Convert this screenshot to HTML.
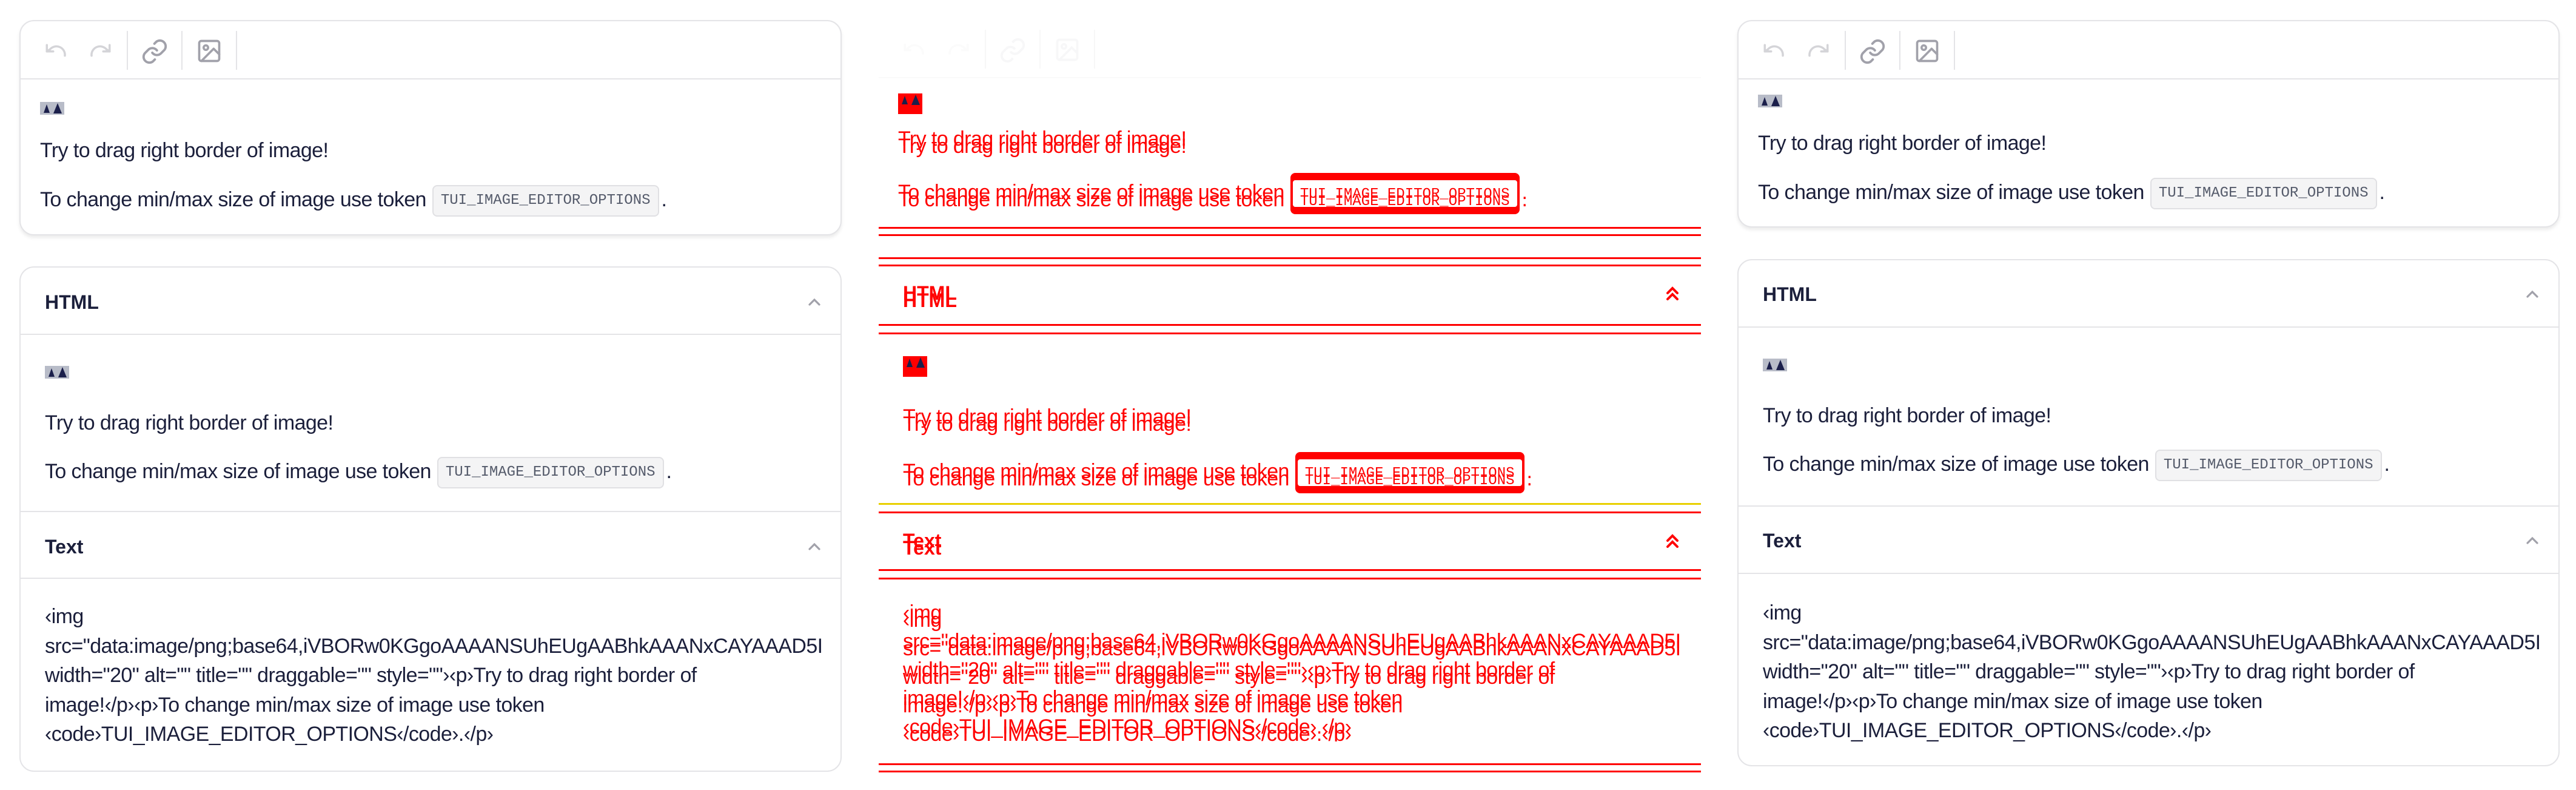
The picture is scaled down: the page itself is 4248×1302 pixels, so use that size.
<!DOCTYPE html>
<html><head><meta charset="utf-8">
<style>
*{margin:0;padding:0;box-sizing:border-box}
html,body{width:4248px;height:1302px;background:#fff;overflow:hidden;font-family:"Liberation Sans",sans-serif;color:#1b1f3b}
.panel{position:absolute;top:0;width:1356px;height:1302px}
.card{position:absolute;left:0;width:1356px;border:2px solid #e4e4e7;border-radius:24px;background:#fff}
.c1{top:33px;height:342px;box-shadow:0 4px 6px rgba(0,0,0,.08)}
.c2{top:427px;height:836px}
.tb{position:absolute;left:0;top:0;width:100%;height:96px;border-bottom:2px solid #e4e4e7}
.sep{position:absolute;top:16px;width:2px;height:64px;background:#e4e4e7}
.ic{position:absolute;top:27px}
.abs{position:absolute;white-space:nowrap}
.t{font-size:34px;line-height:48px;height:48px;letter-spacing:-0.6px}
.tok{display:inline-block;font-family:"Liberation Mono",monospace;font-size:24px;letter-spacing:0;color:#555b6b;background:#f4f4f5;border:2px solid #e0e0e3;border-radius:8px;height:52px;line-height:48px;padding:0 12px;vertical-align:middle;margin-left:10px;margin-right:4px}
.img{position:absolute;width:40px;height:21px;background:#b8bcc8}
.img:before{content:"";position:absolute;left:6px;top:4px;width:10px;height:14px;background:#1b1f4b;clip-path:polygon(50% 0,100% 100%,0 100%)}
.img:after{content:"";position:absolute;left:22px;top:2px;width:14px;height:17px;background:#1b1f4b;clip-path:polygon(50% 0,100% 100%,0 100%)}
.hd{font-size:32px;font-weight:bold;line-height:48px}
.div{position:absolute;left:0;width:100%;height:2px;background:#e4e4e7}
.chev{position:absolute}
.code{font-size:34px;letter-spacing:-0.6px;line-height:48.5px;white-space:pre;overflow:hidden;width:1300px}
/* diff panel */
.diff .card{border:none;box-shadow:none;background:transparent}
.diff .tb{border-bottom:2px solid #fafafa}
.diff .sep{background:#f7f7f7}
.diff .ic{opacity:.08}
.diff .t,.diff .hd,.diff .code{color:#f00;text-shadow:0 12px 0 #f00}
.diff .tok{background:#fff;border:4px solid #f00;box-shadow:0 -8px 0 #f00,0 8px 0 #f00;color:#f00}
.diff .div{background:#f00;height:3px;box-shadow:0 14px 0 #f00}
.diff .img{background:#f00;height:34px}
.rl{position:absolute;left:0;width:1356px;height:3px;background:#f00}
</style></head><body>

<div class="panel" style="left:32px">
 <div class="card c1" style="height:355px">
  <div class="tb">
   <svg class="ic" style="left:38px" width="42" height="42" viewBox="0 0 24 24" fill="none" stroke="#d4d4d8" stroke-width="2" stroke-linecap="round" stroke-linejoin="round"><path d="M3 7v6h6"/><path d="M20 17a8 8 0 0 0-14-6l-3 2"/></svg>
   <svg class="ic" style="left:110px" width="42" height="42" viewBox="0 0 24 24" fill="none" stroke="#d4d4d8" stroke-width="2" stroke-linecap="round" stroke-linejoin="round"><path d="M21 7v6h-6"/><path d="M4 17a8 8 0 0 1 14-6l3 2"/></svg>
   <div class="sep" style="left:175px"></div>
   <svg class="ic" style="left:198px" width="46" height="46" viewBox="0 0 24 24" fill="none" stroke="#a1a1aa" stroke-width="2" stroke-linecap="round"><path d="M10 13a5 5 0 0 0 7.5.5l3-3a5 5 0 0 0-7-7l-1.7 1.7"/><path d="M14 11a5 5 0 0 0-7.5-.5l-3 3a5 5 0 0 0 7 7l1.7-1.7"/></svg>
   <div class="sep" style="left:265px"></div>
   <svg class="ic" style="left:289px" width="44" height="44" viewBox="0 0 24 24" fill="none" stroke="#a1a1aa" stroke-width="2" stroke-linecap="round" stroke-linejoin="round"><rect x="3" y="3" width="18" height="18" rx="2"/><circle cx="9" cy="9" r="2"/><path d="M21 15l-5-5L5 21"/></svg>
   <div class="sep" style="left:355px"></div>
  </div>
  <div class="img" style="left:32px;top:133px"></div>
  <div class="abs t" style="left:32px;top:189px">Try to drag right border of image!</div>
  <div class="abs t" style="left:32px;top:270px">To change min/max size of image use token<span class="tok">TUI_IMAGE_EDITOR_OPTIONS</span>.</div>
 </div>
 <div class="card c2" style="top:439px;height:833px">
  <div class="abs hd" style="left:40px;top:33px">HTML</div>
  <svg class="chev" style="left:1295px;top:47px" width="28" height="20" viewBox="0 0 14 10" fill="none" stroke="#a1a1aa" stroke-width="1.6" stroke-linecap="round"><path d="M3 7l4-4 4 4"/></svg>
  <div class="div" style="top:109px"></div>
  <div class="img" style="left:40px;top:162px"></div>
  <div class="abs t" style="left:40px;top:232px">Try to drag right border of image!</div>
  <div class="abs t" style="left:40px;top:312px">To change min/max size of image use token<span class="tok">TUI_IMAGE_EDITOR_OPTIONS</span>.</div>
  <div class="div" style="top:401px"></div>
  <div class="abs hd" style="left:40px;top:436px">Text</div>
  <svg class="chev" style="left:1295px;top:450px" width="28" height="20" viewBox="0 0 14 10" fill="none" stroke="#a1a1aa" stroke-width="1.6" stroke-linecap="round"><path d="M3 7l4-4 4 4"/></svg>
  <div class="div" style="top:511px"></div>
  <div class="abs code" style="left:40px;top:551px">‹img
src="data:image/png;base64,iVBORw0KGgoAAAANSUhEUgAABhkAAANxCAYAAAD5I
width="20" alt="" title="" draggable="" style=""›‹p›Try to drag right border of
image!‹/p›‹p›To change min/max size of image use token
‹code›TUI_IMAGE_EDITOR_OPTIONS‹/code›.‹/p›</div>
 </div>
</div>

<div class="panel diff" style="left:1449px">
 <div class="rl" style="top:374px"></div>
 <div class="rl" style="top:386px"></div>
 <div class="rl" style="top:424px"></div>
 <div class="rl" style="top:436px"></div>
 <div class="rl" style="top:1258px"></div>
 <div class="rl" style="top:1270px"></div>
 <div class="card c1">
  <div class="tb">
   <svg class="ic" style="left:38px" width="42" height="42" viewBox="0 0 24 24" fill="none" stroke="#d4d4d8" stroke-width="2"><path d="M3 7v6h6"/><path d="M20 17a8 8 0 0 0-14-6l-3 2"/></svg>
   <svg class="ic" style="left:110px" width="42" height="42" viewBox="0 0 24 24" fill="none" stroke="#d4d4d8" stroke-width="2"><path d="M21 7v6h-6"/><path d="M4 17a8 8 0 0 1 14-6l3 2"/></svg>
   <div class="sep" style="left:175px"></div>
   <svg class="ic" style="left:198px" width="46" height="46" viewBox="0 0 24 24" fill="none" stroke="#a1a1aa" stroke-width="2"><path d="M10 13a5 5 0 0 0 7.5.5l3-3a5 5 0 0 0-7-7l-1.7 1.7"/><path d="M14 11a5 5 0 0 0-7.5-.5l-3 3a5 5 0 0 0 7 7l1.7-1.7"/></svg>
   <div class="sep" style="left:265px"></div>
   <svg class="ic" style="left:289px" width="44" height="44" viewBox="0 0 24 24" fill="none" stroke="#a1a1aa" stroke-width="2"><rect x="3" y="3" width="18" height="18" rx="2"/><circle cx="9" cy="9" r="2"/><path d="M21 15l-5-5L5 21"/></svg>
   <div class="sep" style="left:355px"></div>
  </div>
  <div class="img" style="left:32px;top:121px"></div>
  <div class="abs t" style="left:32px;top:172px">Try to drag right border of image!</div>
  <div class="abs t" style="left:32px;top:260px">To change min/max size of image use token<span class="tok">TUI_IMAGE_EDITOR_OPTIONS</span>.</div>
 </div>
 <div class="card c2">
  <div class="abs hd" style="left:40px;top:32px">HTML</div>
  <svg class="chev" style="left:1295px;top:42px" width="28" height="30" viewBox="0 0 14 15" fill="none" stroke="#f00" stroke-width="2" stroke-linecap="round"><path d="M3 7l4-4 4 4M3 12l4-4 4 4"/></svg>
  <div class="div" style="top:107px"></div>
  <div class="img" style="left:40px;top:160px"></div>
  <div class="abs t" style="left:40px;top:236px">Try to drag right border of image!</div>
  <div class="abs t" style="left:40px;top:326px">To change min/max size of image use token<span class="tok">TUI_IMAGE_EDITOR_OPTIONS</span>.</div>
  <div class="div" style="top:402px;background:#e8d000"></div>
  <div class="abs hd" style="left:40px;top:440px">Text</div>
  <svg class="chev" style="left:1295px;top:450px" width="28" height="30" viewBox="0 0 14 15" fill="none" stroke="#f00" stroke-width="2" stroke-linecap="round"><path d="M3 7l4-4 4 4M3 12l4-4 4 4"/></svg>
  <div class="div" style="top:511px"></div>
  <div class="abs code" style="left:40px;top:560px;line-height:47px">‹img
src="data:image/png;base64,iVBORw0KGgoAAAANSUhEUgAABhkAAANxCAYAAAD5I
width="20" alt="" title="" draggable="" style=""›‹p›Try to drag right border of
image!‹/p›‹p›To change min/max size of image use token
‹code›TUI_IMAGE_EDITOR_OPTIONS‹/code›.‹/p›</div>
 </div>
</div>

<div class="panel" style="left:2865px">
 <div class="card c1">
  <div class="tb">
   <svg class="ic" style="left:38px" width="42" height="42" viewBox="0 0 24 24" fill="none" stroke="#d4d4d8" stroke-width="2" stroke-linecap="round" stroke-linejoin="round"><path d="M3 7v6h6"/><path d="M20 17a8 8 0 0 0-14-6l-3 2"/></svg>
   <svg class="ic" style="left:110px" width="42" height="42" viewBox="0 0 24 24" fill="none" stroke="#d4d4d8" stroke-width="2" stroke-linecap="round" stroke-linejoin="round"><path d="M21 7v6h-6"/><path d="M4 17a8 8 0 0 1 14-6l3 2"/></svg>
   <div class="sep" style="left:175px"></div>
   <svg class="ic" style="left:198px" width="46" height="46" viewBox="0 0 24 24" fill="none" stroke="#a1a1aa" stroke-width="2" stroke-linecap="round"><path d="M10 13a5 5 0 0 0 7.5.5l3-3a5 5 0 0 0-7-7l-1.7 1.7"/><path d="M14 11a5 5 0 0 0-7.5-.5l-3 3a5 5 0 0 0 7 7l1.7-1.7"/></svg>
   <div class="sep" style="left:265px"></div>
   <svg class="ic" style="left:289px" width="44" height="44" viewBox="0 0 24 24" fill="none" stroke="#a1a1aa" stroke-width="2" stroke-linecap="round" stroke-linejoin="round"><rect x="3" y="3" width="18" height="18" rx="2"/><circle cx="9" cy="9" r="2"/><path d="M21 15l-5-5L5 21"/></svg>
   <div class="sep" style="left:355px"></div>
  </div>
  <div class="img" style="left:32px;top:121px"></div>
  <div class="abs t" style="left:32px;top:177px">Try to drag right border of image!</div>
  <div class="abs t" style="left:32px;top:258px">To change min/max size of image use token<span class="tok">TUI_IMAGE_EDITOR_OPTIONS</span>.</div>
 </div>
 <div class="card c2">
  <div class="abs hd" style="left:40px;top:32px">HTML</div>
  <svg class="chev" style="left:1295px;top:46px" width="28" height="20" viewBox="0 0 14 10" fill="none" stroke="#a1a1aa" stroke-width="1.6" stroke-linecap="round"><path d="M3 7l4-4 4 4"/></svg>
  <div class="div" style="top:109px"></div>
  <div class="img" style="left:40px;top:162px"></div>
  <div class="abs t" style="left:40px;top:232px">Try to drag right border of image!</div>
  <div class="abs t" style="left:40px;top:312px">To change min/max size of image use token<span class="tok">TUI_IMAGE_EDITOR_OPTIONS</span>.</div>
  <div class="div" style="top:404px"></div>
  <div class="abs hd" style="left:40px;top:438px">Text</div>
  <svg class="chev" style="left:1295px;top:452px" width="28" height="20" viewBox="0 0 14 10" fill="none" stroke="#a1a1aa" stroke-width="1.6" stroke-linecap="round"><path d="M3 7l4-4 4 4"/></svg>
  <div class="div" style="top:515px"></div>
  <div class="abs code" style="left:40px;top:557px">‹img
src="data:image/png;base64,iVBORw0KGgoAAAANSUhEUgAABhkAAANxCAYAAAD5I
width="20" alt="" title="" draggable="" style=""›‹p›Try to drag right border of
image!‹/p›‹p›To change min/max size of image use token
‹code›TUI_IMAGE_EDITOR_OPTIONS‹/code›.‹/p›</div>
 </div>
</div>

</body></html>
